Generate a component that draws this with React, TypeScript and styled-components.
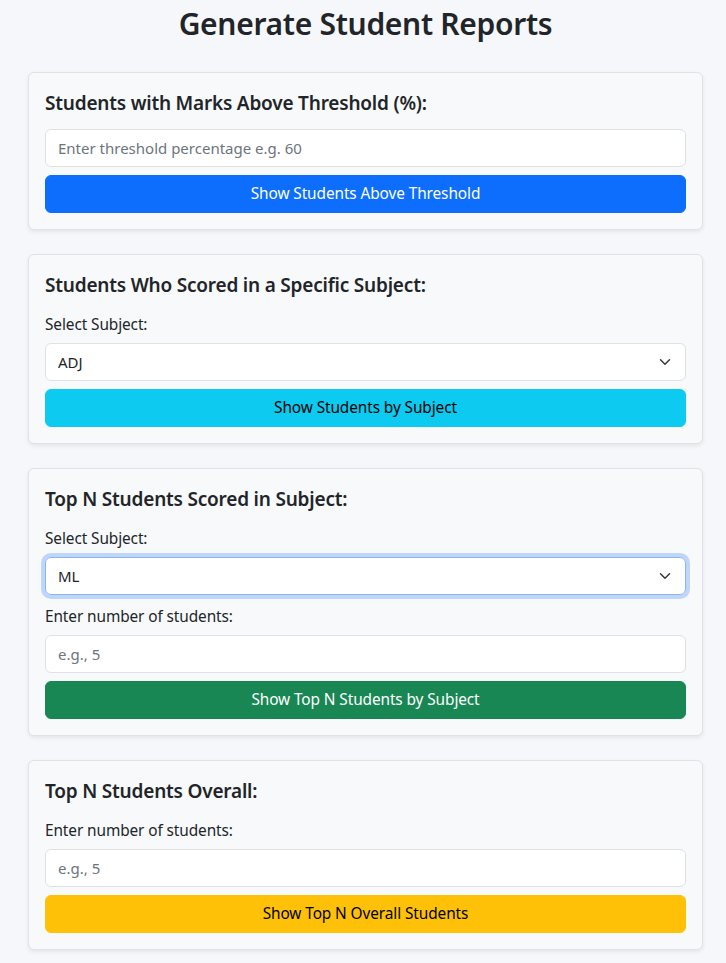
import React from "react";
import styled, { createGlobalStyle, css } from "styled-components";

const GlobalStyle = createGlobalStyle`
  *, *::before, *::after { box-sizing: border-box; }
  html, body { margin: 0; padding: 0; }
  body {
    background: #f5f7fa;
    color: #212529;
    font-family: "Noto Sans", "Open Sans", sans-serif;
    font-size: 16px;
    line-height: 1.5;
  }
`;

const Page = styled.main`
  padding: 6px 23px 16px 28px;
`;

const Title = styled.h2`
  margin: 0 0 30px;
  text-align: center;
  font-size: 30px;
  font-weight: 600;
  line-height: 36px;
  letter-spacing: -0.3px;
  color: #212529;
`;

const Card = styled.section`
  background: #f8f9fa;
  border: 1px solid #dfe2e6;
  border-radius: 6px;
  box-shadow: 0 0.125rem 0.25rem rgba(0, 0, 0, 0.075);
  padding: 16px;
  margin-bottom: 24px;
  display: flex;
  flex-direction: column;
`;

const CardTitle = styled.h5`
  margin: 0 0 14px;
  padding-top: 2px;
  font-size: 19px;
  font-weight: 600;
  line-height: 24px;
  letter-spacing: -0.2px;
  color: #212529;
`;

const Label = styled.label`
  display: block;
  margin-bottom: 6px;
  padding-top: 2px;
  font-size: 15.4px;
  line-height: 24px;
  letter-spacing: -0.1px;
  color: #212529;
`;

const fieldBase = css`
  display: block;
  width: 100%;
  height: 38px;
  margin-bottom: 8px;
  padding: 6px 12px;
  font-family: inherit;
  font-size: 15px;
  line-height: 24px;
  color: #212529;
  background-color: #fff;
  border: 1px solid #dee2e6;
  border-radius: 6px;
  outline: none;
`;

const Input = styled.input`
  ${fieldBase}
  &::placeholder { color: #6c757d; opacity: 1; }
`;

const SelectWrap = styled.div<{ $focused?: boolean }>`
  position: relative;
  margin-bottom: 8px;
  border-radius: 6px;
  ${(p) =>
    p.$focused &&
    css`
      box-shadow: 0 0 0 4px rgba(13, 110, 253, 0.25);
    `}
`;

const Select = styled.select<{ $focused?: boolean }>`
  ${fieldBase}
  margin-bottom: 0;
  appearance: none;
  -webkit-appearance: none;
  padding-right: 36px;
  border-color: ${(p) => (p.$focused ? "#86b7fe" : "#dee2e6")};
`;

const Chevron = styled.svg`
  position: absolute;
  right: 14px;
  top: 13px;
  width: 14px;
  height: 12px;
  pointer-events: none;
`;

const variants = {
  primary: { bg: "#0d6efd", fg: "#fff" },
  info: { bg: "#0dcaf0", fg: "#000" },
  success: { bg: "#198754", fg: "#fff" },
  warning: { bg: "#ffc107", fg: "#000" },
};

const Button = styled.button<{ $variant: keyof typeof variants }>`
  display: block;
  width: 100%;
  height: 38px;
  padding: 6px 12px;
  font-family: inherit;
  font-size: 15.4px;
  line-height: 24px;
  letter-spacing: -0.1px;
  text-align: center;
  border: 1px solid ${(p) => variants[p.$variant].bg};
  border-radius: 6px;
  background: ${(p) => variants[p.$variant].bg};
  color: ${(p) => variants[p.$variant].fg};
  cursor: pointer;
`;

const ArrowIcon = () => (
  <Chevron viewBox="0 0 16 16" aria-hidden="true">
    <path
      d="M2 5l6 6 6-6"
      fill="none"
      stroke="#343a40"
      strokeWidth="2"
      strokeLinecap="round"
      strokeLinejoin="round"
    />
  </Chevron>
);

const subjects = ["ADJ", "ML", "DBMS", "OS", "CN"];

const SubjectSelect = ({ value, focused }: { value: string; focused?: boolean }) => (
  <SelectWrap $focused={focused}>
    <Select defaultValue={value} $focused={focused}>
      {subjects.map((s) => (
        <option key={s} value={s}>
          {s}
        </option>
      ))}
    </Select>
    <ArrowIcon />
  </SelectWrap>
);

export default function App() {
  return (
    <>
      <GlobalStyle />
      <Page>
        <Title>Generate Student Reports</Title>

        <Card>
          <CardTitle>Students with Marks Above Threshold (%):</CardTitle>
          <Input type="number" placeholder="Enter threshold percentage e.g. 60" />
          <Button $variant="primary">Show Students Above Threshold</Button>
        </Card>

        <Card>
          <CardTitle>Students Who Scored in a Specific Subject:</CardTitle>
          <Label>Select Subject:</Label>
          <SubjectSelect value="ADJ" />
          <Button $variant="info">Show Students by Subject</Button>
        </Card>

        <Card>
          <CardTitle>Top N Students Scored in Subject:</CardTitle>
          <Label>Select Subject:</Label>
          <SubjectSelect value="ML" focused />
          <Label>Enter number of students:</Label>
          <Input type="number" placeholder="e.g., 5" />
          <Button $variant="success">Show Top N Students by Subject</Button>
        </Card>

        <Card>
          <CardTitle>Top N Students Overall:</CardTitle>
          <Label>Enter number of students:</Label>
          <Input type="number" placeholder="e.g., 5" />
          <Button $variant="warning">Show Top N Overall Students</Button>
        </Card>
      </Page>
    </>
  );
}
